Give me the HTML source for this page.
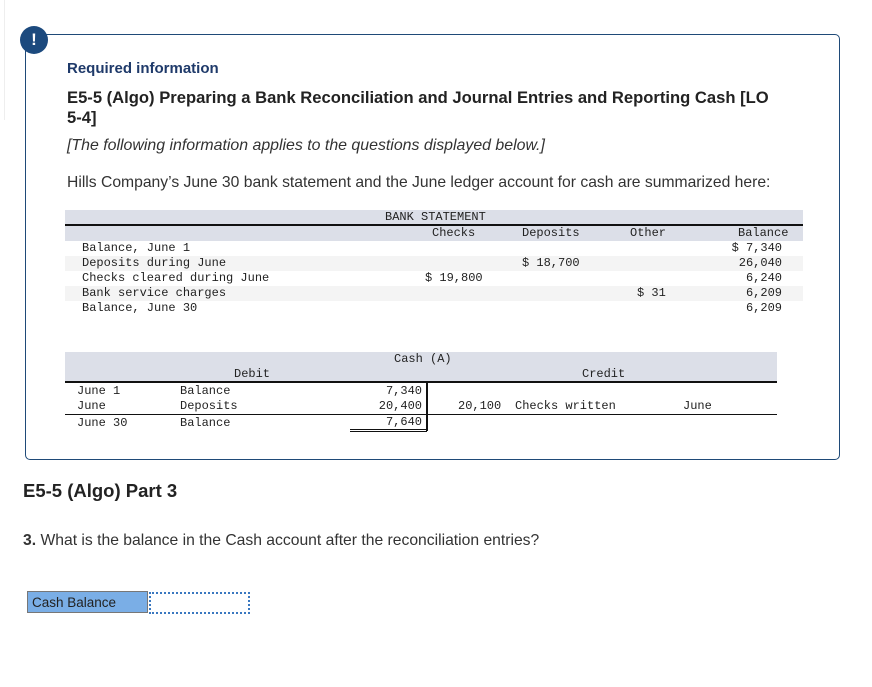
<!DOCTYPE html>
<html><head><meta charset="utf-8"><style>
body{margin:0;width:872px;height:687px;background:#fff;position:relative;font-family:"Liberation Sans",sans-serif;color:#222;overflow:hidden}
.a{position:absolute;white-space:nowrap}
.m{font-family:"Liberation Mono",monospace;font-size:12px;color:#222;line-height:15px}
.r{text-align:right}
</style></head><body>
<div class="a" style="left:0;top:0;width:4px;height:120px;border-right:1px solid #eee"></div>
<div class="a" style="left:25px;top:34px;width:813px;height:424px;border:1px solid #1f4a78;border-radius:5px"></div>
<div class="a" style="left:20px;top:26px;width:28px;height:28px;border-radius:50%;background:#1c4a7e;color:#fff;font-weight:bold;font-size:17px;text-align:center;line-height:28px">!</div>
<div class="a" style="left:67px;top:60px;font-size:15px;font-weight:bold;color:#1f3a6a">Required information</div>
<div class="a" style="left:67px;top:88px;font-size:16.6px;font-weight:bold;line-height:20px;color:#222">E5-5 (Algo) Preparing a Bank Reconciliation and Journal Entries and Reporting Cash [LO<br>5-4]</div>
<div class="a" style="left:67px;top:137px;font-size:15.9px;font-style:italic;color:#333">[The following information applies to the questions displayed below.]</div>
<div class="a" style="left:67px;top:174px;font-size:15.7px;color:#333">Hills Company’s June 30 bank statement and the June ledger account for cash are summarized here:</div>

<div class="a" style="left:65px;top:210px;width:738px;height:31px;background:#dcdfe8"></div>
<div class="a" style="left:65px;top:224px;width:738px;height:2px;background:#111"></div>
<div class="a" style="left:65px;top:256px;width:738px;height:15px;background:#f4f4f4"></div>
<div class="a" style="left:65px;top:286px;width:738px;height:15px;background:#f4f4f4"></div>
<div class="a m" style="left:385px;top:210px">BANK STATEMENT</div>
<div class="a m" style="left:432px;top:226px">Checks</div>
<div class="a m" style="left:522px;top:226px">Deposits</div>
<div class="a m" style="left:630px;top:226px">Other</div>
<div class="a m" style="left:738px;top:226px">Balance</div>
<div class="a m" style="left:82px;top:241px">Balance, June 1<br>Deposits during June<br>Checks cleared during June<br>Bank service charges<br>Balance, June 30</div>
<div class="a m r" style="left:700px;top:241px;width:82px">$ 7,340<br>26,040<br>6,240<br>6,209<br>6,209</div>
<div class="a m" style="left:522px;top:256px">$ 18,700</div>
<div class="a m" style="left:425px;top:271px">$ 19,800</div>
<div class="a m" style="left:637px;top:286px">$ 31</div>

<div class="a" style="left:65px;top:352px;width:712px;height:30px;background:#dcdfe8"></div>
<div class="a" style="left:65px;top:381px;width:712px;height:2px;background:#111"></div>
<div class="a m" style="left:394px;top:352px">Cash (A)</div>
<div class="a m" style="left:234px;top:367px">Debit</div>
<div class="a m" style="left:582px;top:367px">Credit</div>
<div class="a" style="left:426px;top:383px;width:2px;height:48px;background:#111"></div>
<div class="a" style="left:65px;top:414px;width:712px;height:1px;background:#111"></div>
<div class="a m" style="left:77px;top:384px">June 1<br>June</div>
<div class="a m" style="left:77px;top:416px">June 30</div>
<div class="a m" style="left:180px;top:384px">Balance<br>Deposits</div>
<div class="a m" style="left:180px;top:416px">Balance</div>
<div class="a m r" style="left:350px;top:384px;width:72px">7,340<br>20,400</div>
<div class="a m r" style="left:350px;top:415px;width:72px">7,640</div>
<div class="a" style="left:350px;top:429px;width:77px;height:1px;background:#111"></div>
<div class="a" style="left:350px;top:431px;width:77px;height:1px;background:#111"></div>
<div class="a m" style="left:458px;top:399px">20,100</div>
<div class="a m" style="left:515px;top:399px">Checks written</div>
<div class="a m" style="left:683px;top:399px">June</div>

<div class="a" style="left:23px;top:480px;font-size:18.5px;font-weight:bold;color:#222">E5-5 (Algo) Part 3</div>
<div class="a" style="left:23px;top:532px;font-size:15.7px;color:#333"><b>3.</b> What is the balance in the Cash account after the reconciliation entries?</div>

<div class="a" style="left:27px;top:591px;width:121px;height:22px;background:#7aaee6;border:1px solid #777;font-size:13.5px;line-height:22px;padding-left:4px;box-sizing:border-box;color:#222">Cash Balance</div>
<div class="a" style="left:149px;top:592px;width:101px;height:22px;border:2px dotted #3a78c0;box-sizing:border-box"></div>
</body></html>
